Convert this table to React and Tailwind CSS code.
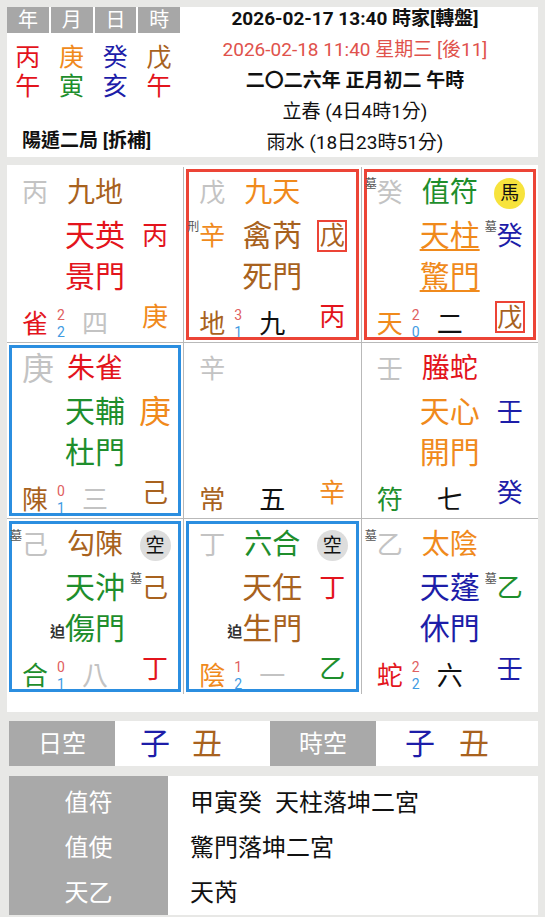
import React from "react";

const gray = "text-[#c3c3c3]";
const red = "text-[#e3141c]";
const orange = "text-[#f08a1c]";
const brown = "text-[#a8621e]";
const blue = "text-[#1d1da8]";
const green = "text-[#1e8e2c]";
const black = "text-[#111111]";

function Ch({ c, color, big }) {
  return (
    <span className={`${big ? "text-[32px]" : "text-[26px]"} leading-none ${color}`}>{c}</span>
  );
}

function Pre({ p, children, bold }) {
  return (
    <span className="relative inline-flex">
      <span
        className={
          bold
            ? "absolute right-full bottom-[4px] text-[15px] font-bold leading-none text-[#333333]"
            : "absolute right-full top-[-2px] text-[12px] leading-none text-[#555555]"
        }
      >
        {p}
      </span>
      {children}
    </span>
  );
}

function Big({ t, color, under }) {
  return (
    <span
      className={`text-[30px] leading-none whitespace-nowrap ${color} ${
        under ? "underline decoration-2 underline-offset-[3px]" : ""
      }`}
    >
      {t}
    </span>
  );
}

function Top({ t, color }) {
  return <span className={`text-[28px] leading-none whitespace-nowrap ${color}`}>{t}</span>;
}

function Nums({ a, b }) {
  return (
    <span className="ml-[9px] mb-[-4px] flex flex-col text-[14px] leading-[17px]">
      <span className="text-[#e06060]">{a}</span>
      <span className="text-[#3f9be2]">{b}</span>
    </span>
  );
}

function Boxed({ c, color }) {
  return (
    <span className="flex h-[32px] w-[30px] items-center justify-center border-2 border-[#ec4436]">
      <span className={`text-[25px] leading-none ${color}`}>{c}</span>
    </span>
  );
}

function Circle({ c, yellow }) {
  return (
    <span
      className={`flex h-[31px] w-[31px] items-center justify-center rounded-full text-[19px] leading-none text-[#111111] ${
        yellow ? "bg-[#f7e33c]" : "bg-[#dddddd]"
      }`}
    >
      {c}
    </span>
  );
}

function Cell({ box, tl, top, tr, ml, star, mr, door, bl, bm, br }) {
  const border =
    box === "red" ? "border-[#ec4436]" : box === "blue" ? "border-[#2b8ee0]" : "border-transparent";
  return (
    <div className="bg-white p-[2px]">
      <div
        className={`grid h-full grid-cols-[50px_66px_50px] grid-rows-[42px_43px_40px_40px] border-[3px] ${border}`}
      >
        <div className="flex items-center pl-[10px]">{tl}</div>
        <div className="flex items-center justify-center">{top}</div>
        <div className="flex items-center justify-center pl-[4px]">{tr}</div>
        <div className="flex items-center pl-[10px]">{ml}</div>
        <div className="flex items-center justify-center">{star}</div>
        <div className="flex items-center justify-center pl-[4px]">{mr}</div>
        <div />
        <div className="flex items-center justify-center">{door}</div>
        <div />
        <div className="flex items-end pl-[10px]">{bl}</div>
        <div className="flex items-end justify-center">{bm}</div>
        <div className="flex items-center justify-center pl-[4px]">{br}</div>
      </div>
    </div>
  );
}

export default function App() {
  return (
    <div className="min-h-[917px] w-[545px] bg-[#e8e8e6] px-[7px] pt-[7px] font-[Roboto,'Noto_Sans_CJK_TC',sans-serif] text-[#111111]">
      {/* header */}
      <div className="flex h-[150px] bg-white">
        <div className="flex w-[173px] flex-col">
          <div className="flex gap-[2px]">
            {["年", "月", "日", "時"].map((t) => (
              <div
                key={t}
                className="flex h-[26px] w-[42px] items-center justify-center bg-[#a7a7a7] text-[20px] leading-none text-white"
              >
                {t}
              </div>
            ))}
          </div>
          <div className="mt-[10px] flex gap-[2px] text-[25px] leading-[29px]">
            <span className={`w-[42px] text-center ${red}`}>丙</span>
            <span className={`w-[42px] text-center ${orange}`}>庚</span>
            <span className={`w-[42px] text-center ${blue}`}>癸</span>
            <span className={`w-[42px] text-center ${brown}`}>戊</span>
          </div>
          <div className="flex gap-[2px] text-[25px] leading-[29px]">
            <span className={`w-[42px] text-center ${red}`}>午</span>
            <span className={`w-[42px] text-center ${green}`}>寅</span>
            <span className={`w-[42px] text-center ${blue}`}>亥</span>
            <span className={`w-[42px] text-center ${red}`}>午</span>
          </div>
          <div className="mt-[28px] whitespace-nowrap pl-[15px] text-[19px] font-semibold leading-[24px]">
            陽遁二局 [拆補]
          </div>
        </div>
        <div className="-mt-[4px] flex flex-1 flex-col items-center pr-[8px] text-[19px] leading-[31px]">
          <div className="whitespace-nowrap font-bold">2026-02-17 13:40 時家[轉盤]</div>
          <div className="whitespace-nowrap text-[#e0524c]">2026-02-18 11:40 星期三 [後11]</div>
          <div className="whitespace-nowrap font-bold">二〇二六年 正月初二 午時</div>
          <div className="whitespace-nowrap">立春 (4日4時1分)</div>
          <div className="whitespace-nowrap">雨水 (18日23時51分)</div>
        </div>
      </div>

      {/* grid */}
      <div className="mt-[8px] bg-white pb-[18px] pt-[2px]">
        <div className="grid grid-cols-3 grid-rows-[175px_175px_175px] gap-px bg-[#b9b9b9]">
          <Cell
            tl={<Ch c="丙" color={gray} />}
            top={<Top t="九地" color={brown} />}
            star={<Big t="天英" color={red} />}
            mr={<Ch c="丙" color={red} />}
            door={<Big t="景門" color={red} />}
            bl={<><Ch c="雀" color={red} /><Nums a="2" b="2" /></>}
            bm={<Ch c="四" color={gray} />}
            br={<Ch c="庚" color={orange} />}
          />
          <Cell
            box="red"
            tl={<Ch c="戊" color={gray} />}
            top={<Top t="九天" color={orange} />}
            ml={<Pre p="刑"><Ch c="辛" color={orange} /></Pre>}
            star={<Big t="禽芮" color={brown} />}
            mr={<Boxed c="戊" color={brown} />}
            door={<Big t="死門" color={brown} />}
            bl={<><Ch c="地" color={brown} /><Nums a="3" b="1" /></>}
            bm={<Ch c="九" color={black} />}
            br={<Ch c="丙" color={red} />}
          />
          <Cell
            box="red"
            tl={<Pre p="墓"><Ch c="癸" color={gray} /></Pre>}
            top={<Top t="值符" color={green} />}
            tr={<Circle c="馬" yellow />}
            star={<Big t="天柱" color={orange} under />}
            mr={<Pre p="墓"><Ch c="癸" color={blue} /></Pre>}
            door={<Big t="驚門" color={orange} under />}
            bl={<><Ch c="天" color={orange} /><Nums a="2" b="0" /></>}
            bm={<Ch c="二" color={black} />}
            br={<Boxed c="戊" color={brown} />}
          />
          <Cell
            box="blue"
            tl={<Ch c="庚" color={gray} big />}
            top={<Top t="朱雀" color={red} />}
            star={<Big t="天輔" color={green} />}
            mr={<Ch c="庚" color={orange} big />}
            door={<Big t="杜門" color={green} />}
            bl={<><Ch c="陳" color={brown} /><Nums a="0" b="1" /></>}
            bm={<Ch c="三" color={gray} />}
            br={<Ch c="己" color={brown} />}
          />
          <Cell
            tl={<Ch c="辛" color={gray} />}
            bl={<Ch c="常" color={brown} />}
            bm={<Ch c="五" color={black} />}
            br={<Ch c="辛" color={orange} />}
          />
          <Cell
            tl={<Ch c="壬" color={gray} />}
            top={<Top t="螣蛇" color={red} />}
            star={<Big t="天心" color={orange} />}
            mr={<Ch c="壬" color={blue} />}
            door={<Big t="開門" color={orange} />}
            bl={<Ch c="符" color={green} />}
            bm={<Ch c="七" color={black} />}
            br={<Ch c="癸" color={blue} />}
          />
          <Cell
            box="blue"
            tl={<Pre p="墓"><Ch c="己" color={gray} /></Pre>}
            top={<Top t="勾陳" color={brown} />}
            tr={<Circle c="空" />}
            star={<Big t="天沖" color={green} />}
            mr={<Pre p="墓"><Ch c="己" color={brown} /></Pre>}
            door={<Pre p="迫" bold><Big t="傷門" color={green} /></Pre>}
            bl={<><Ch c="合" color={green} /><Nums a="0" b="1" /></>}
            bm={<Ch c="八" color={gray} />}
            br={<Ch c="丁" color={red} />}
          />
          <Cell
            box="blue"
            tl={<Ch c="丁" color={gray} />}
            top={<Top t="六合" color={green} />}
            tr={<Circle c="空" />}
            star={<Big t="天任" color={brown} />}
            mr={<Ch c="丁" color={red} />}
            door={<Pre p="迫" bold><Big t="生門" color={brown} /></Pre>}
            bl={<><Ch c="陰" color={orange} /><Nums a="1" b="2" /></>}
            bm={<Ch c="一" color={gray} />}
            br={<Ch c="乙" color={green} />}
          />
          <Cell
            tl={<Pre p="墓"><Ch c="乙" color={gray} /></Pre>}
            top={<Top t="太陰" color={orange} />}
            star={<Big t="天蓬" color={blue} />}
            mr={<Pre p="墓"><Ch c="乙" color={green} /></Pre>}
            door={<Big t="休門" color={blue} />}
            bl={<><Ch c="蛇" color={red} /><Nums a="2" b="2" /></>}
            bm={<Ch c="六" color={black} />}
            br={<Ch c="壬" color={blue} />}
          />
        </div>
      </div>

      {/* 空亡 row */}
      <div className="ml-[2px] mt-[9px] flex h-[45px] bg-white">
        <div className="flex w-[106px] items-center justify-center bg-[#a9a9a9] text-[24px] text-white">日空</div>
        <div className="flex w-[155px] items-center gap-[22px] pl-[25px] text-[30px] leading-none">
          <span className={blue}>子</span>
          <span className={brown}>丑</span>
        </div>
        <div className="flex w-[106px] items-center justify-center bg-[#a9a9a9] text-[24px] text-white">時空</div>
        <div className="flex flex-1 items-center gap-[24px] pl-[29px] text-[30px] leading-none">
          <span className={blue}>子</span>
          <span className={brown}>丑</span>
        </div>
      </div>

      {/* info table */}
      <div className="ml-[2px] mt-[10px] flex h-[139px] bg-white">
        <div className="flex w-[159px] flex-col bg-[#a9a9a9] pt-[5px] text-[24px] text-white">
          <div className="flex h-[45px] items-center justify-center">值符</div>
          <div className="flex h-[45px] items-center justify-center">值使</div>
          <div className="flex h-[45px] items-center justify-center">天乙</div>
        </div>
        <div className="flex flex-1 flex-col pl-[22px] pt-[5px] text-[24px] text-[#111111]">
          <div className="flex h-[45px] items-center whitespace-nowrap">
            甲寅癸<span className="ml-[13px]">天柱落坤二宮</span>
          </div>
          <div className="flex h-[45px] items-center">驚門落坤二宮</div>
          <div className="flex h-[45px] items-center">天芮</div>
        </div>
      </div>
    </div>
  );
}
